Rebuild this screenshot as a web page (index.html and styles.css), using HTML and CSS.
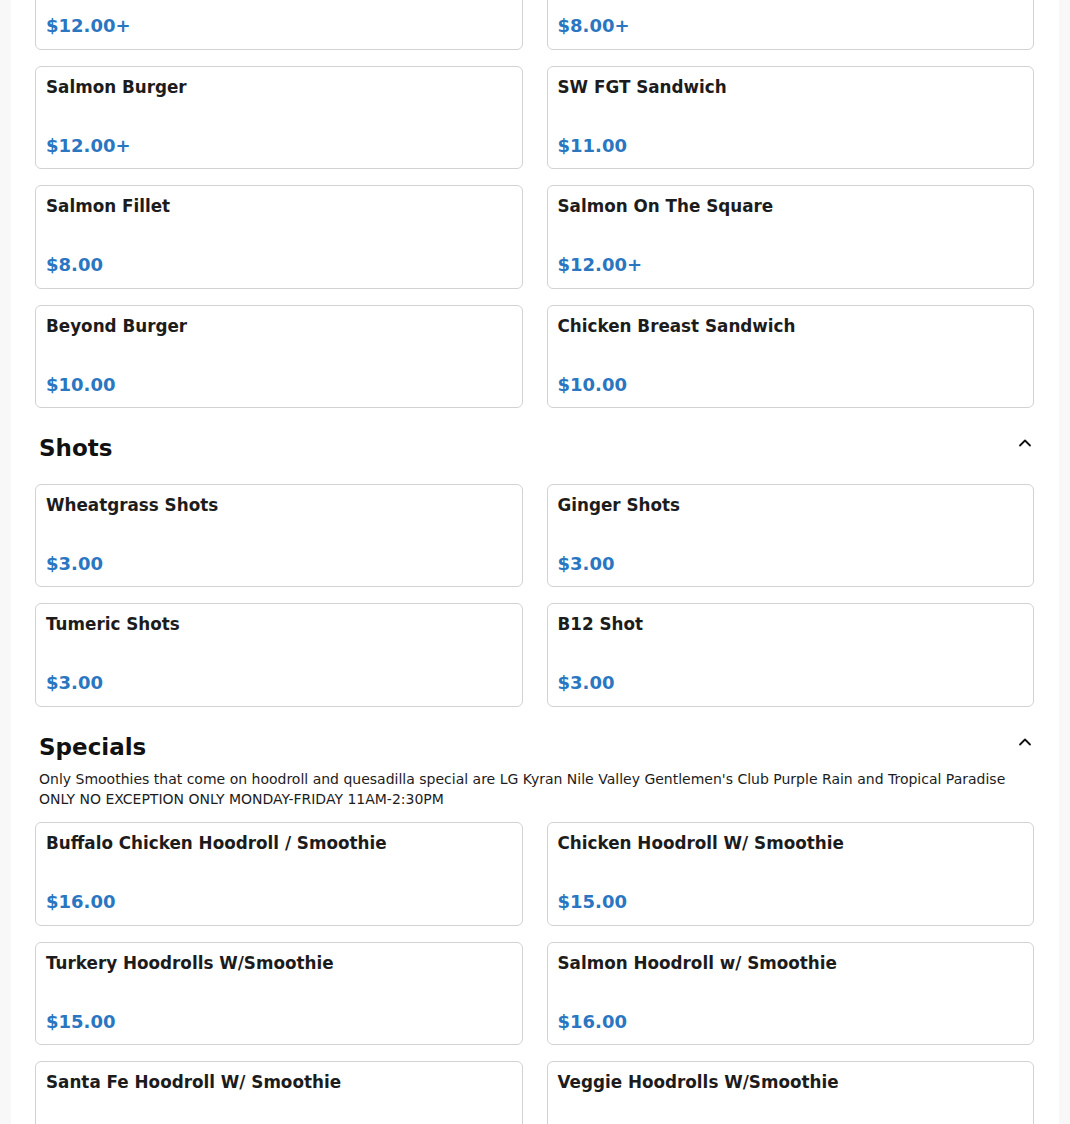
FILE: index.html
```html
<!DOCTYPE html>
<html lang="en">
<head>
<meta charset="utf-8">
<title>Menu</title>
<link rel="stylesheet" href="styles.css">
</head>
<body>
<main class="menu">
  <section class="section section-first">
    <div class="grid">
      <div class="card"><div class="item-name">Turkey Burger</div><div class="item-price">$12.00+</div></div>
      <div class="card"><div class="item-name">Veggie Burger</div><div class="item-price">$8.00+</div></div>
      <div class="card"><div class="item-name">Salmon Burger</div><div class="item-price">$12.00+</div></div>
      <div class="card"><div class="item-name">SW FGT Sandwich</div><div class="item-price">$11.00</div></div>
      <div class="card"><div class="item-name">Salmon Fillet</div><div class="item-price">$8.00</div></div>
      <div class="card"><div class="item-name">Salmon On The Square</div><div class="item-price">$12.00+</div></div>
      <div class="card"><div class="item-name">Beyond Burger</div><div class="item-price">$10.00</div></div>
      <div class="card"><div class="item-name">Chicken Breast Sandwich</div><div class="item-price">$10.00</div></div>
    </div>
  </section>

  <section class="section">
    <div class="section-head">
      <h2 class="section-title">Shots</h2>
      <svg class="chevron" viewBox="0 0 16 16" width="16" height="16" aria-hidden="true"><path d="M3 10.5 L8 5.5 L13 10.5" fill="none" stroke="#111" stroke-width="1.8" stroke-linecap="round" stroke-linejoin="round"/></svg>
    </div>
    <div class="grid">
      <div class="card"><div class="item-name">Wheatgrass Shots</div><div class="item-price">$3.00</div></div>
      <div class="card"><div class="item-name">Ginger Shots</div><div class="item-price">$3.00</div></div>
      <div class="card"><div class="item-name">Tumeric Shots</div><div class="item-price">$3.00</div></div>
      <div class="card"><div class="item-name">B12 Shot</div><div class="item-price">$3.00</div></div>
    </div>
  </section>

  <section class="section">
    <div class="section-head has-desc">
      <h2 class="section-title">Specials</h2>
      <svg class="chevron" viewBox="0 0 16 16" width="16" height="16" aria-hidden="true"><path d="M3 10.5 L8 5.5 L13 10.5" fill="none" stroke="#111" stroke-width="1.8" stroke-linecap="round" stroke-linejoin="round"/></svg>
    </div>
    <p class="section-desc">Only Smoothies that come on hoodroll and quesadilla special are LG Kyran Nile Valley Gentlemen's Club Purple Rain and Tropical Paradise ONLY NO EXCEPTION ONLY MONDAY-FRIDAY 11AM-2:30PM</p>
    <div class="grid">
      <div class="card"><div class="item-name">Buffalo Chicken Hoodroll / Smoothie</div><div class="item-price">$16.00</div></div>
      <div class="card"><div class="item-name">Chicken Hoodroll W/ Smoothie</div><div class="item-price">$15.00</div></div>
      <div class="card"><div class="item-name">Turkery Hoodrolls W/Smoothie</div><div class="item-price">$15.00</div></div>
      <div class="card"><div class="item-name">Salmon Hoodroll w/ Smoothie</div><div class="item-price">$16.00</div></div>
      <div class="card"><div class="item-name">Santa Fe Hoodroll W/ Smoothie</div><div class="item-price">$15.00</div></div>
      <div class="card"><div class="item-name">Veggie Hoodrolls W/Smoothie</div><div class="item-price">$15.00</div></div>
    </div>
  </section>
</main>
</body>
</html>
```

FILE: styles.css
```css
html, body {
  margin: 0;
  padding: 0;
  background: #f8f8f8;
}

body {
  font-family: "DejaVu Sans", Verdana, sans-serif;
  color: #1c1c1c;
}

.menu {
  box-sizing: border-box;
  width: 1048px;
  margin: -54px auto 0;
  padding: 0 25px 40px 24px;
  background: #ffffff;
  min-height: 1300px;
}

.section {
  margin-top: 27px;
}

.section-first {
  margin-top: 0;
}

.grid {
  display: grid;
  grid-template-columns: 1fr 1fr;
  column-gap: 24px;
  row-gap: 16px;
}

.card {
  box-sizing: border-box;
  min-height: 103.5px;
  display: flex;
  flex-direction: column;
  justify-content: space-between;
  border: 1px solid #d2d2d2;
  border-radius: 6px;
  padding: 10px;
  background: #fff;
}

.item-name {
  font-size: 16.8px;
  font-weight: bold;
  line-height: 1.2;
  color: #1c1c1c;
}

.item-price {
  font-size: 18px;
  font-weight: bold;
  line-height: 1.35;
  color: #2a76c1;
}

.section-head {
  display: flex;
  justify-content: space-between;
  align-items: flex-start;
  padding: 0 1px 0 4px;
  margin-bottom: 21px;
}

.section-head.has-desc {
  margin-bottom: 8px;
}

.section-title {
  margin: 0;
  font-size: 23px;
  font-weight: bold;
  line-height: 1.2;
  color: #111;
}

.chevron {
  display: block;
  flex: none;
}

.section-desc {
  margin: 0 0 12.5px;
  padding: 0 4px;
  font-size: 14px;
  line-height: 1.45;
  color: #1c1c1c;
}
```
